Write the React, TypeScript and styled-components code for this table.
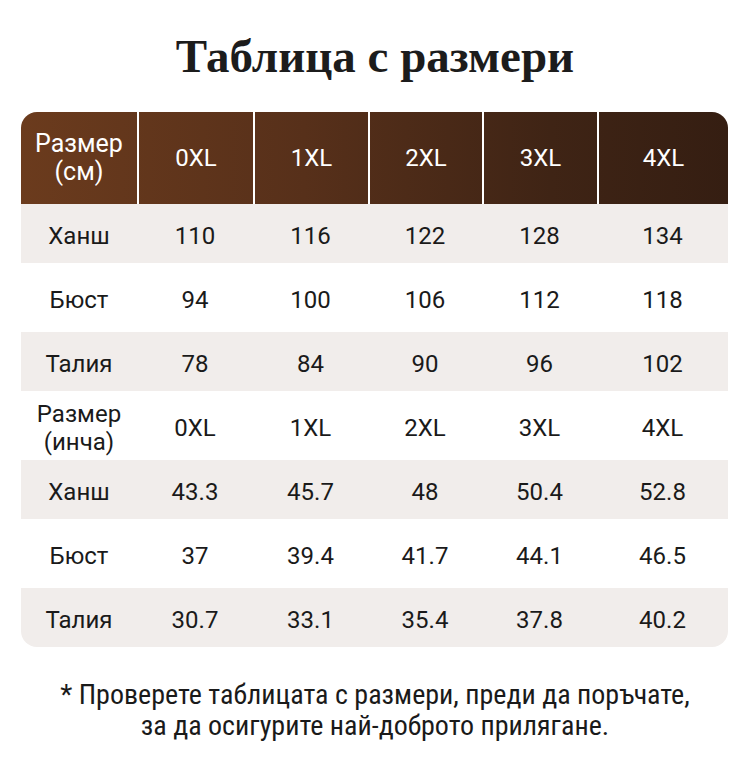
import styled, { createGlobalStyle } from "styled-components";

const GlobalStyle = createGlobalStyle`
  html, body {
    margin: 0;
    padding: 0;
    background: #ffffff;
  }
`;

const columns = "116px 116px 115px 114px 115px 131px";

const StyledPage = styled.div`
  width: 750px;
  padding-top: 29px;
  font-family: Roboto, "Noto Sans", sans-serif;
`;

const StyledTitle = styled.h1`
  margin: 0;
  height: 55px;
  line-height: 55px;
  text-align: center;
  font-family: "Liberation Serif", "DejaVu Serif", serif;
  font-weight: 700;
  font-size: 47px;
  color: #1c1c1c;
`;

const StyledTable = styled.div`
  margin: 28px 22px 0 21px;
  width: 707px;
  border-radius: 16px;
  overflow: hidden;
`;

const StyledHeaderRow = styled.div`
  display: grid;
  grid-template-columns: ${columns};
  height: 92px;
  background: linear-gradient(90deg, #6b3b1d 0%, #57301a 40%, #3f2415 75%, #351e12 100%);
`;

const StyledHeaderCell = styled.div<{ $first?: boolean }>`
  display: flex;
  align-items: center;
  justify-content: center;
  text-align: center;
  color: #ffffff;
  font-size: ${(p) => (p.$first ? "25px" : "24px")};
  line-height: 28px;
  padding-bottom: 1px;
  border-left: ${(p) => (p.$first ? "none" : "2px solid #ffffff")};
`;

const StyledRow = styled.div<{ $shaded: boolean }>`
  display: grid;
  grid-template-columns: ${columns};
  height: ${(p) => (p.$shaded ? "59px" : "69px")};
  background: ${(p) => (p.$shaded ? "#f1edeb" : "#ffffff")};
`;

const StyledCell = styled.div`
  display: flex;
  align-items: center;
  justify-content: center;
  text-align: center;
  color: #1a1a1a;
  font-size: 24px;
  line-height: 28px;
  padding-top: 5px;
`;

const StyledNote = styled.p`
  margin: 32px 0 0;
  text-align: center;
  font-family: "Liberation Sans Narrow", "Roboto Condensed", "DejaVu Sans Condensed", Roboto, sans-serif;
  font-size: 28px;
  line-height: 31px;
  color: #1a1a1a;
`;

const sizes = ["0XL", "1XL", "2XL", "3XL", "4XL"];

const rows: { label: React.ReactNode; values: string[] }[] = [
  { label: "Ханш", values: ["110", "116", "122", "128", "134"] },
  { label: "Бюст", values: ["94", "100", "106", "112", "118"] },
  { label: "Талия", values: ["78", "84", "90", "96", "102"] },
  {
    label: (
      <>
        Размер
        <br />
        (инча)
      </>
    ),
    values: sizes,
  },
  { label: "Ханш", values: ["43.3", "45.7", "48", "50.4", "52.8"] },
  { label: "Бюст", values: ["37", "39.4", "41.7", "44.1", "46.5"] },
  { label: "Талия", values: ["30.7", "33.1", "35.4", "37.8", "40.2"] },
];

const App = (): JSX.Element => {
  return (
    <StyledPage>
      <GlobalStyle />
      <StyledTitle>Таблица с размери</StyledTitle>
      <StyledTable>
        <StyledHeaderRow>
          <StyledHeaderCell $first>
            Размер
            <br />
            (см)
          </StyledHeaderCell>
          {sizes.map((s) => (
            <StyledHeaderCell key={s}>{s}</StyledHeaderCell>
          ))}
        </StyledHeaderRow>
        {rows.map((row, i) => (
          <StyledRow key={i} $shaded={i % 2 === 0}>
            <StyledCell>{row.label}</StyledCell>
            {row.values.map((v, j) => (
              <StyledCell key={j}>{v}</StyledCell>
            ))}
          </StyledRow>
        ))}
      </StyledTable>
      <StyledNote>
        * Проверете таблицата с размери, преди да поръчате,
        <br />
        за да осигурите най-доброто прилягане.
      </StyledNote>
    </StyledPage>
  );
};

export default App;
